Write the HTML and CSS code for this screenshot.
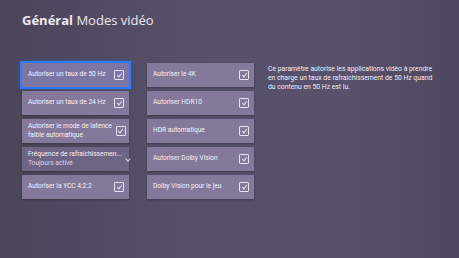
FILE: index.html
```html
<!DOCTYPE html>
<html lang="fr">
<head>
    <meta charset="UTF-8">
    <title>Modes vidéo</title>
    <link rel="stylesheet" href="styles.css">
</head>
<body>
    <div class="screen">
        <h1 class="title"><b>Général</b> Modes vidéo</h1>

        <div class="layout">
            <div class="column">
                <div class="tile focused">
                    <span class="label">Autoriser un taux de 50 Hz</span>
                    <span class="check"></span>
                </div>
                <div class="tile">
                    <span class="label">Autoriser un taux de 24 Hz</span>
                    <span class="check"></span>
                </div>
                <div class="tile">
                    <span class="label">Autoriser le mode de latence<br>faible automatique</span>
                    <span class="check"></span>
                </div>
                <div class="tile dropdown">
                    <span class="label">Fréquence de rafraîchissemen...<br><span class="value">Toujours activé</span></span>
                    <span class="chevron"></span>
                </div>
                <div class="tile">
                    <span class="label">Autoriser la YCC 4:2:2</span>
                    <span class="check"></span>
                </div>
            </div>

            <div class="column">
                <div class="tile">
                    <span class="label">Autoriser le 4K</span>
                    <span class="check"></span>
                </div>
                <div class="tile">
                    <span class="label">Autoriser HDR10</span>
                    <span class="check"></span>
                </div>
                <div class="tile">
                    <span class="label">HDR automatique</span>
                    <span class="check"></span>
                </div>
                <div class="tile">
                    <span class="label">Autoriser Dolby Vision</span>
                    <span class="check"></span>
                </div>
                <div class="tile">
                    <span class="label">Dolby Vision pour le jeu</span>
                    <span class="check"></span>
                </div>
            </div>

            <p class="description">Ce paramètre autorise les applications vidéo à prendre<br>en charge un taux de rafraîchissement de 50 Hz quand<br>du contenu en 50 Hz est lu.</p>
        </div>
    </div>
</body>
</html>
```

FILE: styles.css
```css
html, body {
    margin: 0;
    height: 100%;
}

body {
    background: linear-gradient(90deg, #4a4558 0%, #56506a 40%, #58516c 75%, #4e485e 100%);
    font-family: "Open Sans", "Noto Sans", sans-serif;
    color: #f2eff7;
    overflow: hidden;
}

.screen {
    padding: 11px 0 0 22px;
}

.title {
    margin: 0;
    font-size: 13px;
    font-weight: 400;
    line-height: 18px;
    color: #ece8f2;
}

.title b {
    font-weight: 700;
}

.layout {
    display: flex;
    align-items: flex-start;
    margin-top: 34px;
}

.column {
    display: flex;
    flex-direction: column;
    gap: 4px;
    width: 107px;
    margin-right: 18px;
}

.column + .column {
    margin-right: 14px;
}

.tile {
    display: flex;
    align-items: center;
    justify-content: space-between;
    gap: 4px;
    height: 24px;
    padding: 0 5px 0 6px;
    box-sizing: border-box;
    background: #84799b;
    box-shadow: 0 1px 2px rgba(30, 25, 40, 0.4);
}

.tile.focused {
    background: #7c76a4;
    outline: 2px solid #2a7bff;
    box-shadow: 0 0 4px 1px rgba(40, 120, 255, 0.7);
}

.tile.dropdown {
    background: #6e6585;
}

.label {
    font-family: Roboto, "Open Sans", sans-serif;
    font-size: 6.6px;
    line-height: 9.5px;
    color: #f4f1f8;
    white-space: nowrap;
}

.value {
    color: #dcd6e6;
}

.check {
    position: relative;
    flex: none;
    width: 8px;
    height: 8px;
    border: 1px solid #e6e1ee;
    border-radius: 1px;
}

.check::after {
    content: "";
    position: absolute;
    left: 2.5px;
    top: 0.5px;
    width: 2px;
    height: 4px;
    border: solid #e6e1ee;
    border-width: 0 1px 1px 0;
    transform: rotate(40deg);
}

.chevron {
    flex: none;
    width: 3px;
    height: 3px;
    margin: 0 3px 0 0;
    border: solid #d8d2e2;
    border-width: 0 1px 1px 0;
    transform: rotate(45deg);
}

.description {
    margin: 2px 0 0;
    font-family: Roboto, "Open Sans", sans-serif;
    font-size: 6.8px;
    line-height: 9px;
    color: #f0edf5;
    white-space: nowrap;
}
```
